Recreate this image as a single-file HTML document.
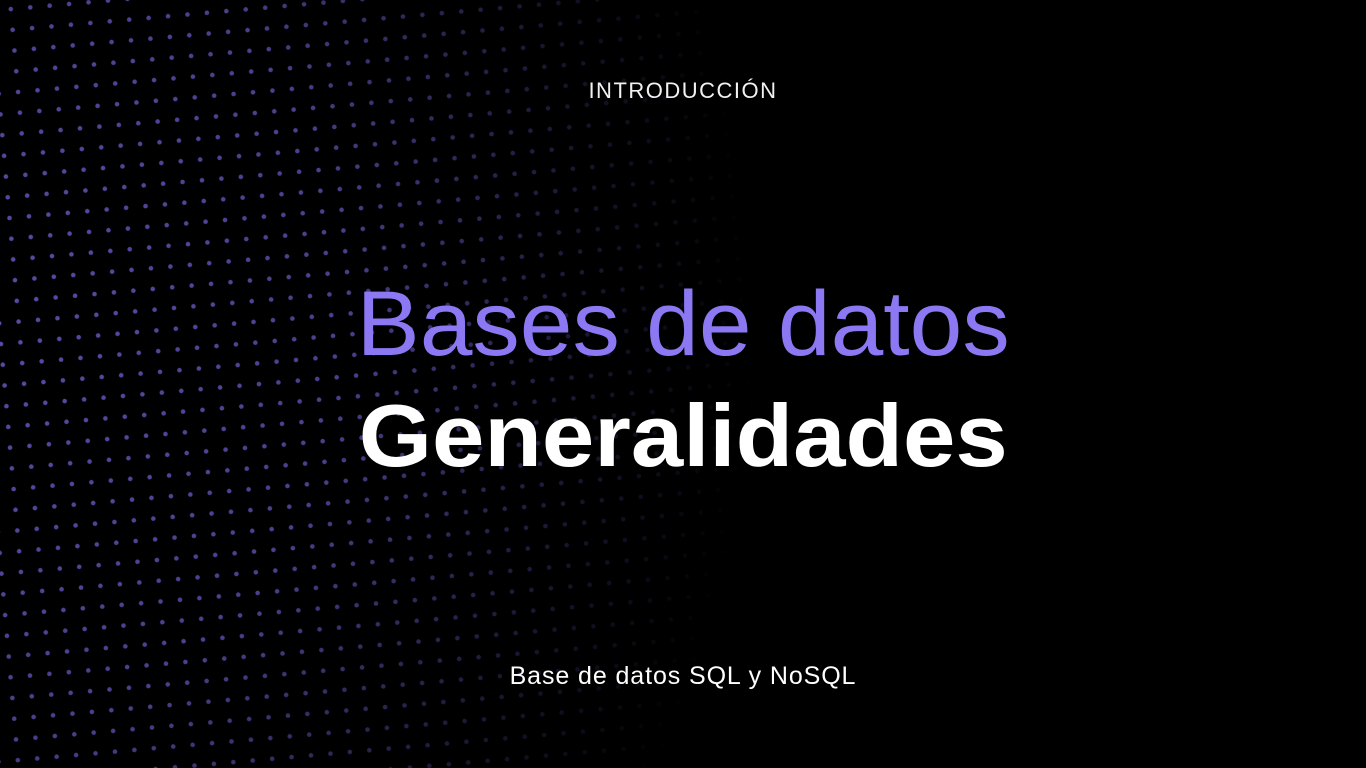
<!DOCTYPE html>
<html><head><meta charset="utf-8"><style>
html,body{margin:0;padding:0;background:#000;width:1366px;height:768px;overflow:hidden}
body{position:relative;font-family:"Liberation Sans",sans-serif}
svg.bg{position:absolute;left:0;top:0;width:1366px;height:768px;display:block}
.t{position:absolute;left:0;width:1366px;text-align:center;white-space:nowrap}
.intro{top:78px;font-size:22px;color:#f2f2f2;letter-spacing:1.5px}
.h1{top:278px;font-size:92px;color:#8b78f2;line-height:1}
.h1 span{display:inline-block;transform:scaleX(1.03)}
.h2{top:392px;font-size:88px;color:#fff;font-weight:bold;line-height:1}
.h2 span{display:inline-block;transform:scaleX(1.07)}
.sub{top:662px;font-size:25px;color:#fff;letter-spacing:0.9px}
</style></head><body>
<svg class="bg" viewBox="0 0 1366 768">
<defs>
<pattern id="p" width="19.5" height="20.8" patternUnits="userSpaceOnUse" patternTransform="rotate(-5)">
<circle cx="10" cy="10" r="2.3" fill="#5a4aa6"/>
</pattern>
<radialGradient id="g" cx="0" cy="320" r="800" gradientUnits="userSpaceOnUse" gradientTransform="translate(0 320) scale(0.95 1.15) translate(0 -320)">
<stop offset="0" stop-color="#fff" stop-opacity="1"/>
<stop offset="0.45" stop-color="#fff" stop-opacity="0.85"/>
<stop offset="0.8" stop-color="#fff" stop-opacity="0.25"/>
<stop offset="1" stop-color="#fff" stop-opacity="0"/>
</radialGradient>
<mask id="m"><rect width="1366" height="768" fill="url(#g)"/></mask>
</defs>
<rect width="1366" height="768" fill="url(#p)" mask="url(#m)"/>
</svg>
<div class="t intro">INTRODUCCIÓN</div>
<div class="t h1"><span>Bases de datos</span></div>
<div class="t h2"><span>Generalidades</span></div>
<div class="t sub">Base de datos SQL y NoSQL</div>
</body></html>
